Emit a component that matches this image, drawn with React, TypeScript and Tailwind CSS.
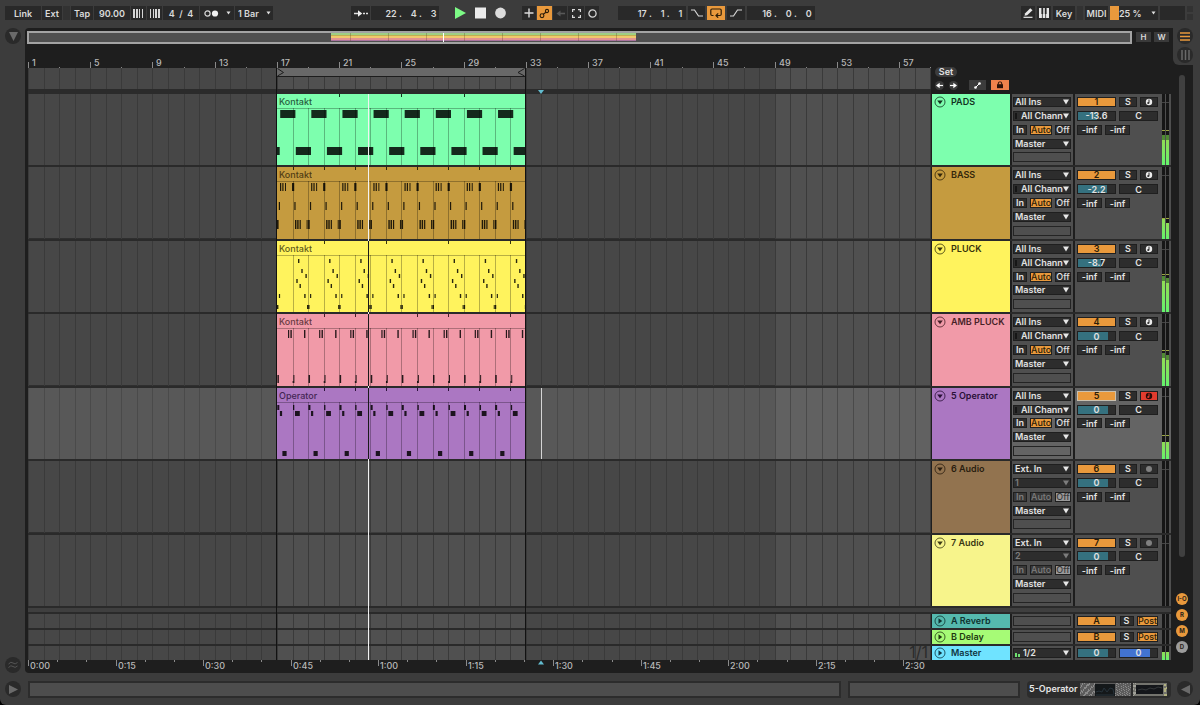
import React from "react";

const BAR = 15.56;
const CLIP_W = 249;

const range = (n: number) => Array.from({ length: n }, (_, i) => i);
const barX = (bar: number) => Math.round((bar - 1) * BAR);

type Note = [x: number, y: number, w: number, h: number];

const every = (period: number, notes: Note[]): Note[] =>
  range(Math.ceil(CLIP_W / period) + 1).flatMap((i) =>
    notes.map(([x, y, w, h]) => [x + i * period, y, w, h] as Note)
  );

const PADS: Note[] = [[0, 53, 2.7, 8], ...every(BAR * 2, [[3.2, 16, 15.2, 8], [18.8, 53, 15.2, 8]])];

const BASS: Note[] = [
  ...every(BAR * 2, [
    [3, 16, 1.2, 8],
    [5.3, 16, 1.2, 8],
    [8, 16, 1, 8],
    [15, 16, 2.2, 8],
    [0, 53, 1.6, 9],
    [18, 53, 1.4, 9],
    [20.2, 53, 1.4, 9],
    [22.6, 53, 1.2, 9],
    [29.6, 53, 1, 9],
  ]),
  ...every(BAR, [[1.8, 35, 1.2, 8]]),
];

const PLUCK: Note[] = every(BAR * 2, [
  [21, 18, 1.4, 4],
  [24.3, 28, 1.4, 4],
  [28.4, 33, 1.4, 4],
  [19.3, 38, 1.4, 4],
  [22.5, 43, 1.4, 4],
  [27.2, 53, 1.4, 4],
  [1.9, 53, 1.2, 4],
  [0, 64, 1.4, 4],
  [30, 64, 1, 4],
]);

const AMB: Note[] = [
  ...every(BAR * 2, [
    [11, 16, 1.2, 8],
    [13.4, 16, 1.4, 8],
    [27, 16, 1.4, 8],
    [0.4, 61, 1.5, 8],
    [16.4, 61, 1, 8],
    [15.6, 67, 1, 2],
  ]),
];

const OPERATOR: Note[] = every(BAR * 2, [
  [0.3, 17, 2, 5],
  [2.9, 23, 2.2, 5],
  [16, 17, 1.3, 5],
  [18, 23, 4.8, 5],
  [5.4, 63, 4.2, 5],
]);

type Track = {
  name: string;
  num: number;
  header: string;
  ink: string;
  clip?: string;
  notes?: Note[];
  ticks?: number[];
  volume: string;
  fill: string;
  audio?: string;
  selected?: boolean;
  meters: [number, number];
  peak: number;
};

const TRACKS: Track[] = [
  { name: "PADS", num: 1, header: "bg-[#7dffae]", ink: "#12331f", clip: "Kontakt", notes: PADS, ticks: [4, 8, 12], volume: "-13.6", fill: "w-1/2", meters: [25, 25], peak: 34 },
  { name: "BASS", num: 2, header: "bg-[#c59b3f]", ink: "#33260a", clip: "Kontakt", notes: BASS, ticks: [1, 3, 5, 7, 9, 11, 13, 15], volume: "-2.2", fill: "w-[78%]", meters: [20, 16], peak: 20 },
  { name: "PLUCK", num: 3, header: "bg-[#fff35d]", ink: "#37340c", clip: "Kontakt", notes: PLUCK, ticks: [3, 7, 11, 15], volume: "-8.7", fill: "w-[62%]", meters: [31, 29], peak: 37 },
  { name: "AMB PLUCK", num: 4, header: "bg-[#f19aa8]", ink: "#471f27", clip: "Kontakt", notes: AMB, ticks: [3, 5, 9, 11, 15], volume: "0", fill: "w-[82%]", meters: [28, 26], peak: 35 },
  { name: "5 Operator", num: 5, header: "bg-[#ab77c2]", ink: "#2a1038", clip: "Operator", notes: OPERATOR, ticks: [3, 5, 7, 9, 11, 13, 15], volume: "0", fill: "w-[82%]", selected: true, meters: [17, 17], peak: 23 },
  { name: "6 Audio", num: 6, header: "bg-[#92734f]", ink: "#2a1e10", volume: "0", fill: "w-[82%]", audio: "1", meters: [0, 0], peak: 0 },
  { name: "7 Audio", num: 7, header: "bg-[#f7f48b]", ink: "#3a3814", volume: "0", fill: "w-[82%]", audio: "2", meters: [0, 0], peak: 0 },
];

const LINES = range(240).map((i) => `M${barX(i + 1)}.5 0V2000`).join("");
const SHADES = range(8);

function Grid({ selected = false }: { selected?: boolean }) {
  return (
    <svg className="absolute inset-0 size-full" aria-hidden="true">
      <rect width="100%" height="100%" fill={selected ? "#585858" : "#474747"} />
      {SHADES.map((i) => (
        <rect key={i} x={barX(17 + i * 32)} width={CLIP_W} height="100%" fill={selected ? "#616161" : "#505050"} />
      ))}
      <path d={LINES} stroke={selected ? "#4a4a4a" : "#3a3a3a"} />
    </svg>
  );
}

const BOX = "h-[14px] shrink-0 bg-[#292929] text-[#dadada] flex items-center justify-center leading-none";

function Chip({ className, children, label }: { className: string; children?: React.ReactNode; label?: string }) {
  return (
    <button type="button" aria-label={label} className={`${BOX} ${className}`}>
      {children}
    </button>
  );
}

function Field({ className, value, label }: { className: string; value: string; label: string }) {
  return (
    <input
      aria-label={label}
      defaultValue={value}
      className={`h-[14px] shrink-0 bg-[#292929] text-[#dadada] text-center leading-none outline-none ${className}`}
    />
  );
}

function Caret() {
  return (
    <svg width="5" height="4" viewBox="0 0 5 4" aria-hidden="true">
      <path d="M0.5 0.5h4L2.5 3.5z" fill="#e0e0e0" />
    </svg>
  );
}

function Transport() {
  return (
    <header className="flex h-7 shrink-0 items-center pl-[5px] pr-[7px] pb-[2px]">
      <div className="flex shrink-0 gap-px">
        <Chip className="w-9">Link</Chip>
        <Chip className="w-5">Ext</Chip>
        <span className="h-[14px] w-[7px] bg-[#323232]" />
        <Chip className="w-[22px]">Tap</Chip>
        <Field className="w-9" value="90.00" label="Tempo" />
        <Chip className="w-[15px]" label="Nudge down">
          <svg width="11" height="9" viewBox="0 0 11 9" fill="#d6d6d6"><path d="M0 0h2v9H0zM3 0h2v9H3zM6 0h1v9H6zM9 0h1v9H9z" /></svg>
        </Chip>
        <Chip className="w-[15px]" label="Nudge up">
          <svg width="11" height="9" viewBox="0 0 11 9" fill="#d6d6d6"><path d="M1 0h1v9H1zM4 0h1v9H4zM6 0h2v9H6zM9 0h2v9H9z" /></svg>
        </Chip>
        <Field className="w-9" value="4  /  4" label="Time signature" />
        <Chip className="w-[34px] gap-[7px]" label="Metronome">
          <svg width="15" height="7" viewBox="0 0 15 7"><circle cx="3.5" cy="3.5" r="2.6" fill="none" stroke="#d6d6d6" strokeWidth="1.2" /><circle cx="11" cy="3.5" r="3.1" fill="#f0f0f0" /></svg>
          <Caret />
        </Chip>
        <span className="relative flex">
          <select aria-label="Quantization" className="h-[14px] w-[38px] appearance-none bg-[#292929] pl-[3px] leading-none text-[#dadada] outline-none">
            <option>1 Bar</option>
          </select>
          <span className="pointer-events-none absolute right-[2px] top-[5px]"><Caret /></span>
        </span>
      </div>
      <div className="grow-[78]" />
      <div className="flex shrink-0 gap-px">
        <Chip className="w-[19px]" label="Follow">
          <svg width="14" height="7" viewBox="0 0 14 7"><path d="M0 3.5h5M9 3.5h2M12 3.5h2" stroke="#e0e0e0" strokeWidth="1.4" /><path d="M4 0.3L8.2 3.5 4 6.7z" fill="#f0f0f0" /></svg>
        </Chip>
        <Field className="w-[68px] pl-3" value="22 .    4 .    3" label="Arrangement position" />
      </div>
      <div className="flex shrink-0 items-center gap-[9px] px-4">
        <button type="button" aria-label="Play"><svg width="11" height="12" viewBox="0 0 11 12"><path d="M0 0L11 6 0 12z" fill="#7dfb86" /></svg></button>
        <button type="button" aria-label="Stop"><svg width="11" height="12" viewBox="0 0 11 12"><path d="M0 0.5h11v11H0z" fill="#ececec" /></svg></button>
        <button type="button" aria-label="Record"><svg width="11" height="12" viewBox="0 0 11 12"><circle cx="5.5" cy="6" r="5.4" fill="#dcdcdc" /></svg></button>
      </div>
      <div className="flex shrink-0 gap-px">
        <Chip className="w-[14px]" label="Overdub"><svg width="10" height="10" viewBox="0 0 10 10"><path d="M5 0.5v9M0.5 5h9" stroke="#dadada" strokeWidth="1.4" /></svg></Chip>
        <button type="button" aria-label="Automation arm" className="flex h-[14px] w-[15px] items-center justify-center bg-[#e9993c]">
          <svg width="11" height="11" viewBox="0 0 11 11" fill="none" stroke="#2b1c08" strokeWidth="1.1"><circle cx="3" cy="7.7" r="1.9" /><circle cx="8" cy="3" r="1.6" /><path d="M4.3 6.3L6.9 4.2" /></svg>
        </button>
        <Chip className="w-[14px]" label="Re-enable automation"><svg width="9" height="7" viewBox="0 0 9 7"><path d="M9 3.5H3" stroke="#585858" strokeWidth="1.6" /><path d="M4.500 0.500v6L0.500 3.500z" fill="#585858" /></svg></Chip>
        <Chip className="w-4" label="Capture"><svg width="9" height="9" viewBox="0 0 9 9" fill="none" stroke="#d6d6d6" strokeWidth="1.2"><path d="M0.6 3V0.6H3M6 0.6h2.4V3M8.4 6v2.4H6M3 8.4H0.6V6" /></svg></Chip>
        <Chip className="w-[14px]" label="Session record"><svg width="9" height="9" viewBox="0 0 9 9"><circle cx="4.5" cy="4.5" r="3.6" fill="none" stroke="#d6d6d6" strokeWidth="1.3" /></svg></Chip>
      </div>
      <div className="flex shrink-0 gap-[2px] pl-[19px]">
        <Field className="w-[68px] pl-4" value="17 .    1 .    1" label="Loop start" />
        <Chip className="w-[17px]" label="Punch in"><svg width="12" height="8" viewBox="0 0 12 8"><path d="M0 1h3.5l4 6H12" fill="none" stroke="#d6d6d6" strokeWidth="1.2" /></svg></Chip>
        <button type="button" aria-label="Loop" className="flex h-[14px] w-[18px] items-center justify-center bg-[#e9993c]">
          <svg width="12" height="10" viewBox="0 0 12 10" fill="none" stroke="#2b1c08" strokeWidth="1.2"><path d="M3.5 7.5H2Q0.8 7.5 0.8 6.3V2.2Q0.8 1 2 1h8q1.2 0 1.2 1.2v4.1Q11.2 7.5 10 7.5H6.5M8.2 5.3L6 7.5l2.2 2.2" /></svg>
        </button>
        <Chip className="w-[18px]" label="Punch out"><svg width="12" height="8" viewBox="0 0 12 8"><path d="M0 7h3.5l4-6H12" fill="none" stroke="#d6d6d6" strokeWidth="1.2" /></svg></Chip>
        <Field className="w-[68px] pl-3" value="16 .    0 .    0" label="Loop length" />
      </div>
      <div className="grow-[206]" />
      <div className="flex shrink-0 gap-[2px]">
        <Chip className="w-[14px]" label="Draw mode"><svg width="10" height="10" viewBox="0 0 10 10"><path d="M1.5 7.800l0.700-2.600L7.300 0.200l2.200 2L4.200 7.200z" fill="#e8e8e8" /><path d="M0.500 9.300h9" stroke="#e8e8e8" strokeWidth="1.200" /></svg></Chip>
        <Chip className="w-[14px]" label="Computer MIDI keyboard">
          <svg width="10" height="10" viewBox="0 0 10 10"><path d="M0 0h10v10H0z" fill="#e8e8e8" /><path d="M2.400 0h1.800v6H2.400zM5.800 0h1.800v6H5.800zM2.900 6h0.800v4h-0.800zM6.300 6h0.800v4h-0.800z" fill="#292929" /></svg>
        </Chip>
        <Chip className="w-[22px]">Key</Chip>
        <span className="h-[14px] w-[6px] bg-[#323232]" />
        <Chip className="w-[23px]">MIDI</Chip>
        <span className="relative flex h-[14px] w-12 bg-[#292929]">
          <span className="w-[9px] bg-[#e9993c]" />
          <select aria-label="CPU load" className="h-[14px] w-[39px] appearance-none leading-none text-[#dadada] outline-none">
            <option>25 %</option>
          </select>
          <span className="pointer-events-none absolute right-[2px] top-[5px]"><Caret /></span>
        </span>
        <span className="h-[14px] w-[25px] bg-[#292929]" />
        <span className="flex w-[6px] flex-col gap-[2px]">
          <span className="flex-1 bg-[#323232]" />
          <span className="flex-1 bg-[#323232]" />
        </span>
      </div>
    </header>
  );
}

function Round({ children, label }: { children: React.ReactNode; label: string }) {
  return (
    <button type="button" aria-label={label} className="flex size-4 items-center justify-center rounded-full bg-[#2a2a2a]">
      {children}
    </button>
  );
}

function Overview() {
  return (
    <div className="flex h-4 shrink-0 items-start gap-1 pl-[2px] pr-1 pt-[3px]">
      <div className="relative h-[13px] min-w-0 flex-1 border-2 border-[#a3a3a3] bg-[#4f4f4f]">
        <svg className="absolute left-[302px] top-0" width="305" height="9" aria-hidden="true">
          <rect width="305" height="3" fill="#9fcf83" />
          <rect y="2" width="305" height="2" fill="#c3b04f" />
          <rect y="3" width="305" height="3" fill="#f0c96c" />
          <rect y="5" width="305" height="2" fill="#e2938f" />
          <rect y="7" width="305" height="1" fill="#a9739e" />
          <path d={range(8).map((i) => `M${19 + i * 38}.5 0V8`).join("")} stroke="#5a4020" strokeOpacity="0.3" />
          <path d="M112.5 0V9" stroke="#fff" />
        </svg>
      </div>
      <div className="flex gap-[3px] pt-px text-[8px] leading-[10px] text-[#dadada]">
        <button type="button" className="h-[10px] w-[15px] bg-[#3a3a3a]">H</button>
        <button type="button" className="h-[10px] w-[15px] bg-[#3a3a3a]">W</button>
      </div>
    </div>
  );
}

function BarRuler() {
  return (
    <div className="relative h-6 overflow-hidden font-medium">
      <svg className="absolute inset-0 size-full" aria-hidden="true">
        <path d={range(40).map((i) => `M${barX(1 + i * 4)}.5 18V24M${barX(3 + i * 4)}.5 23V24`).join("")} stroke="#8a8a8a" />
      </svg>
      {range(15).map((i) => (
        <span key={i} className="absolute top-[14px] leading-[10px] text-[#b8b8b8]" style={{ left: barX(1 + i * 4) + 4 }}>
          {1 + i * 4}
        </span>
      ))}
    </div>
  );
}

function TimeRuler() {
  const stamp = (s: number) => `${Math.floor(s / 60)}:${String(s % 60).padStart(2, "0")}`;
  const step = BAR * 1.875;
  return (
    <div className="relative h-[13px] min-w-0 flex-1 overflow-hidden font-medium">
      <svg className="absolute inset-0 size-full" aria-hidden="true">
        <path d={range(60).map((i) => `M${Math.round(i * step)}.5 0V${i % 3 ? 2 : 6}`).join("")} stroke="#8a8a8a" />
        <path d="M510 4.500l3-4 3 4z" fill="#62bcd0" />
      </svg>
      {range(11).map((i) => (
        <span key={i} className="absolute top-px leading-[10px] text-[#b8b8b8]" style={{ left: Math.round(i * 3 * step) + 2 }}>
          {stamp(i * 15)}
        </span>
      ))}
    </div>
  );
}

function Clip({ track }: { track: Track }) {
  return (
    <div className={`absolute left-[249px] top-0 h-full w-[248px] overflow-hidden ${track.header}`}>
      <svg className="absolute inset-0 size-full" aria-hidden="true">
        <path d={"M0 14.5H248" + range(15).map((i) => `M${barX(i + 2)}.5 14V80`).join("")} stroke="#000" strokeOpacity="0.28" />
        <path d={(track.ticks ?? []).map((t) => `M${barX(t + 1)}.5 0v3`).join("")} stroke={track.ink} />
        {(track.notes ?? []).map(([x, y, w, h], i) => (
          <rect key={i} x={x} y={y} width={w} height={h} fill="#000" fillOpacity="0.84" />
        ))}
      </svg>
      <span className="absolute left-[2px] top-[3px] font-medium leading-[10px] opacity-80" style={{ color: track.ink }}>{track.clip}</span>
    </div>
  );
}

function Drop({ value, label, dim = false, midi = false }: { value: string; label: string; dim?: boolean; midi?: boolean }) {
  return (
    <span className="relative flex h-[10px] w-full border border-[#1f1f1f] bg-[#2d2d2d]">
      {midi && <span className="my-px ml-px w-[2px] bg-[#161616]" />}
      <select
        aria-label={label}
        className={`h-2 min-w-0 flex-1 appearance-none overflow-hidden leading-[8px] outline-none ${midi ? "mr-[7px] pl-1" : "pl-px"} ${dim ? "text-[#7d7d7d]" : "text-[#e2e2e2]"}`}
      >
        <option>{value}</option>
      </select>
      <svg className="pointer-events-none absolute right-px top-px" width="6" height="6" viewBox="0 0 6 6" aria-hidden="true">
        <path d="M0 0.5h6L3 5.5z" fill={dim ? "#7d7d7d" : "#e8e8e8"} />
      </svg>
    </span>
  );
}

const SMALL = "h-[10px] border border-[#1f1f1f] leading-[8px] text-center";

function Routing({ track }: { track: Track }) {
  const audio = track.audio !== undefined;
  const off = audio ? "bg-[#383838] text-[#7d7d7d]" : "bg-[#2d2d2d] text-[#e2e2e2]";
  return (
    <div className={`grid w-[61px] shrink-0 grid-cols-[minmax(0,1fr)] grid-rows-[repeat(5,10px)] content-between py-[3px] pl-px pr-[2px] ${track.selected ? "bg-[#646464]" : "bg-[#4f4f4f]"}`}>
      <Drop value={audio ? "Ext. In" : "All Ins"} label={`${track.name} input type`} />
      <Drop value={track.audio ?? "All Channels"} label={`${track.name} input channel`} dim={audio} midi={!audio} />
      <div className="flex justify-between">
        <button type="button" className={`${SMALL} w-[14px] ${off}`}>In</button>
        <button type="button" className={`${SMALL} w-[22px] font-medium ${audio ? off : "bg-[#e9993c] text-[#2b1c08]"}`}>Auto</button>
        <button type="button" className={`${SMALL} w-4 font-medium ${audio ? "bg-[#9a9a9a] text-[#3a3a3a]" : off}`}>Off</button>
      </div>
      <Drop value="Master" label={`${track.name} output`} />
      <div className="h-[10px] border border-[#242424]" />
    </div>
  );
}

function Value({ value, label, fill, color = "bg-[#35717f]", className }: { value: string; label: string; fill?: string; color?: string; className: string }) {
  return (
    <span className={`relative flex h-[10px] border border-[#1f1f1f] bg-[#2d2d2d] ${className}`}>
      {fill && <span className={`${fill} ${color} h-full`} />}
      <input
        aria-label={label}
        defaultValue={value}
        className="absolute -inset-y-[2px] left-0 h-3 w-full text-center leading-[8px] text-[#e2e2e2] outline-none"
      />
    </span>
  );
}

function Meter({ levels, peak = 0, notch = false }: { levels: [number, number]; peak?: number; notch?: boolean }) {
  return (
    <div className="flex w-[7px] gap-px">
      {levels.map((h, i) => (
        <div key={i} className="relative flex flex-1 flex-col justify-end bg-[#161616]">
          {notch && <span className="absolute inset-x-0 top-[8px] h-px bg-[#444444]" />}
          {peak > 0 && <span className="absolute inset-x-0 h-px bg-[#9aa640]" style={{ bottom: peak }} />}
          {peak > 30 && h > 20 && <span className="h-[5px] bg-[#4f8a33]" />}
          <span className="bg-gradient-to-t from-[#62f26c] to-[#8fdc55]" style={{ height: h }} />
        </div>
      ))}
    </div>
  );
}

function Mixer({ track }: { track: Track }) {
  return (
    <div className={`flex w-24 shrink-0 justify-between px-[2px] ${track.selected ? "bg-[#646464]" : "bg-[#4f4f4f]"}`}>
      <div className="grid w-[81px] grid-rows-[repeat(5,10px)] content-between py-[3px]">
        <div className="flex justify-between">
          <button type="button" className={`h-[10px] w-[39px] border bg-[#e9993c] leading-[8px] text-[#2b1c08] ${track.selected ? "border-[#c9c0b0]" : "border-[#1f1f1f]"}`}>{track.num}</button>
          <button type="button" className={`${SMALL} w-[18px] bg-[#2d2d2d] text-[#e2e2e2]`}>S</button>
          <button type="button" aria-label={`Arm ${track.name}`} className={`${SMALL} flex w-[18px] items-center justify-center ${track.selected ? "bg-[#e23c2e]" : "bg-[#2d2d2d]"}`}>
            <svg width="8" height="8" viewBox="0 0 8 8">
              {track.audio ? (
                <circle cx="4" cy="4" r="3" fill="#808080" />
              ) : (
                <>
                  <circle cx="4" cy="4" r="3.2" fill={track.selected ? "#2a0b08" : "#ececec"} />
                  <path d="M4 1.5v3.2" stroke={track.selected ? "#e23c2e" : "#2d2d2d"} />
                  <circle cx="3.3" cy="5" r="1.1" fill={track.selected ? "#e23c2e" : "#2d2d2d"} />
                </>
              )}
            </svg>
          </button>
        </div>
        <div className="flex justify-between">
          <Value className="w-[39px]" value={track.volume} fill={track.fill} label={`${track.name} volume`} />
          <Value className="w-[39px]" value="C" label={`${track.name} pan`} />
        </div>
        <div className="flex gap-[3px]">
          <Value className="w-[25px]" value="-inf" label={`${track.name} send A`} />
          <Value className="w-[25px]" value="-inf" label={`${track.name} send B`} />
        </div>
      </div>
      <Meter levels={track.meters} peak={track.peak} notch />
    </div>
  );
}

function Fold({ open, color }: { open: boolean; color: string }) {
  return (
    <svg width="12" height="12" viewBox="0 0 12 12" className="shrink-0" aria-hidden="true">
      <circle cx="6" cy="6" r="5" fill="none" stroke={color} strokeOpacity="0.8" />
      <path d={open ? "M3.2 4.5h5.6L6 8.2z" : "M4.5 3.2v5.6L8.2 6z"} fill={color} />
    </svg>
  );
}

function TrackRow({ track }: { track: Track }) {
  return (
    <div className="flex min-h-0 flex-1 border-b-2 border-[#2a2a2a]">
      <div className="relative min-w-0 flex-1 overflow-hidden">
        <Grid selected={track.selected} />
        {track.clip && <Clip track={track} />}
        {track.selected && <span className="absolute left-[513px] top-0 h-full w-px bg-[#d5d5d5]" />}
        {track.num > 2 && track.clip && <span className="absolute left-[340px] top-0 z-20 h-full w-px bg-[#1a1a1a]" />}
      </div>
      <div className={`ml-px mr-[2px] flex w-[78px] shrink-0 items-start gap-[5px] pl-[2px] pt-[2px] ${track.header}`} style={{ color: track.ink }}>
        <Fold open color={track.ink} />
        <span className="whitespace-nowrap leading-[11px]">{track.name}</span>
      </div>
      <Routing track={track} />
      <div className="w-[2px] shrink-0" />
      <Mixer track={track} />
    </div>
  );
}

function ReturnRow({ name, letter, header, ink }: { name: string; letter?: string; header: string; ink: string }) {
  return (
    <div className="flex h-4 shrink-0 border-t-2 border-[#2a2a2a]">
      <div className="relative min-w-0 flex-1">
        <Grid />
        {!letter && <span className="absolute bottom-0 right-[3px] text-[16px] font-normal leading-[16px] text-[#2b2b2b]">1/1</span>}
      </div>
      <div className={`ml-px mr-[2px] flex w-[78px] shrink-0 items-center gap-[5px] pl-[2px] ${header}`} style={{ color: ink }}>
        <Fold open={false} color={ink} />
        <span className="whitespace-nowrap leading-[11px]">{letter ? `${letter} ${name}` : name}</span>
      </div>
      <div className="flex w-[61px] shrink-0 items-center bg-[#4f4f4f] pl-px pr-[2px]">
        {letter ? (
          <div className="h-[10px] w-full border border-[#242424]" />
        ) : (
          <span className="relative flex h-[10px] w-full items-end border border-[#1f1f1f] bg-[#2d2d2d]">
            <span className="ml-px h-1 w-[2px] bg-[#6fe070]" />
            <span className="ml-px h-[3px] w-[2px] bg-[#6fe070]" />
            <select aria-label="Master output" className="h-2 min-w-0 flex-1 appearance-none pl-[3px] leading-[8px] text-[#e2e2e2] outline-none">
              <option>1/2</option>
            </select>
            <svg className="pointer-events-none absolute right-px top-px" width="6" height="6" viewBox="0 0 6 6" aria-hidden="true"><path d="M0 0.5h6L3 5.5z" fill="#e8e8e8" /></svg>
          </span>
        )}
      </div>
      <div className="w-[2px] shrink-0" />
      <div className="flex w-24 shrink-0 justify-between bg-[#4f4f4f] px-[2px]">
        <div className="flex w-[81px] items-center justify-between">
          {letter ? (
            <>
              <button type="button" className={`${SMALL} w-[39px] bg-[#e9993c] text-[#2b1c08]`}>{letter}</button>
              <button type="button" className={`${SMALL} w-[14px] bg-[#2d2d2d] text-[#e2e2e2]`}>S</button>
              <button type="button" className={`${SMALL} w-[21px] bg-[#e9993c] font-medium text-[#2b1c08]`}>Post</button>
            </>
          ) : (
            <>
              <Value className="w-[39px]" value="0" fill="w-[82%]" label="Master volume" />
              <Value className="w-[39px]" value="0" fill="w-[82%]" color="bg-[#4273d0]" label="Cue volume" />
            </>
          )}
        </div>
        <Meter levels={letter ? [0, 0] : [8, 8]} />
      </div>
    </div>
  );
}

function Scrub() {
  return (
    <div className="relative h-[21px] overflow-hidden">
      <Grid />
      <div className="absolute left-[249px] top-0 h-[9px] w-[248px] border-b border-[#1c1c1c] bg-[#686868]">
        <svg className="absolute inset-0 size-full" aria-hidden="true">
          <path d="M0.5 0.500L6.500 4.500 0.500 8M247.500 0.500L241 4.500l6.500 3.500" fill="none" stroke="#1c1c1c" />
        </svg>
      </div>
    </div>
  );
}

function SetTools() {
  return (
    <div className="w-[240px] shrink-0 pl-1 pt-[23px]">
      <button type="button" className="block h-[10px] w-[22px] rounded-full bg-[#3c3c3c] leading-[10px] text-[#e2e2e2]">Set</button>
      <div className="flex items-center pt-[3px]">
        <button type="button" aria-label="Previous locator" className="mr-[5px] flex size-[9px] items-center justify-center rounded-full bg-[#3c3c3c]">
          <svg width="7" height="7" viewBox="0 0 7 7"><path d="M7 3.5H3" stroke="#fff" strokeWidth="1.2" /><path d="M0 3.5L3.7 0.8v5.4z" fill="#fff" /></svg>
        </button>
        <button type="button" aria-label="Next locator" className="mr-[11px] flex size-[9px] items-center justify-center rounded-full bg-[#3c3c3c]">
          <svg width="7" height="7" viewBox="0 0 7 7"><path d="M0 3.5h4" stroke="#fff" strokeWidth="1.2" /><path d="M7 3.5L3.3 0.8v5.4z" fill="#fff" /></svg>
        </button>
        <button type="button" aria-label="Automation mode" className="mr-[5px] flex h-[10px] w-[17px] items-center justify-center bg-[#3c3c3c]">
          <svg width="7" height="7" viewBox="0 0 7 7"><path d="M1.5 5.5l4-4" stroke="#fff" /><circle cx="1.5" cy="5.5" r="1.3" fill="#fff" /><circle cx="5.5" cy="1.5" r="1.3" fill="#fff" /></svg>
        </button>
        <button type="button" aria-label="Lock envelopes" className="flex h-[10px] w-[18px] items-center justify-center bg-[#f0824c]">
          <svg width="8" height="8" viewBox="0 0 8 8"><path d="M1 3.2h6v4H1z" fill="#2b1208" /><path d="M2.3 3.5V2q0-1 1-1h1.400q1 0 1 1v1.500" fill="none" stroke="#2b1208" /></svg>
        </button>
      </div>
    </div>
  );
}

const BADGES = [
  ["I-O", "bg-[#e9993c]"],
  ["R", "bg-[#e9993c]"],
  ["M", "bg-[#e9993c]"],
  ["D", "bg-[#9c9c9c]"],
];

function SideColumn() {
  return (
    <aside className="flex w-5 shrink-0 flex-col rounded-br bg-[#1e1e1e]">
      <div className="flex h-[37px] shrink-0 flex-col items-end gap-[3px] rounded-bl-md bg-[#3c3c3c]">
        <Round label="Arrangement view">
          <svg width="10" height="9" viewBox="0 0 10 9"><path d="M0 1h10M0 4.5h10M0 8h10" stroke="#e9993c" strokeWidth="1.5" /></svg>
        </Round>
        <Round label="Session view">
          <svg width="9" height="10" viewBox="0 0 9 10"><path d="M1 0v10M4.5 0v10M8 0v10" stroke="#6a6a6a" strokeWidth="1.5" /></svg>
        </Round>
      </div>
      <div className="flex-1 pb-[36px] pl-[6px] pt-[10px]">
        <div className="h-full w-[6px] rounded-full bg-[#404040]" />
      </div>
      <div className="flex shrink-0 flex-col items-center gap-1 pb-5 pr-[2px]">
        {BADGES.map(([text, tone]) => (
          <button key={text} type="button" className={`size-3 rounded-full text-center text-[6px] font-bold leading-[12px] text-[#2a2118] ${tone}`}>{text}</button>
        ))}
      </div>
    </aside>
  );
}

const speckle = (n: number, w: number, h: number, seed: number) =>
  range(n)
    .map((i) => {
      const a = (i * 7919 + seed * 104729) % 9973;
      return `M${a % w} ${(Math.floor(a / w) * 3 + i) % h}h1v1h-1z`;
    })
    .join("");

function Footer() {
  return (
    <footer className="flex h-8 shrink-0 items-center pl-[5px] pr-[7px]">
      <Round label="Show info view"><svg width="9" height="9" viewBox="0 0 9 9"><path d="M0 0l9 4.5L0 9z" fill="#6a6a6a" /></svg></Round>
      <div className="ml-[7px] h-[17px] min-w-0 grow border-2 border-[#2c2c2c] bg-[#4d4d4d]" />
      <div className="ml-[7px] h-[17px] w-[172px] shrink-0 border-2 border-[#2c2c2c] bg-[#4d4d4d]" />
      <div className="ml-[7px] flex h-[17px] w-[144px] shrink-0 items-center gap-[2px] rounded-sm bg-[#2c2c2c] pl-[2px]">
        <span className="whitespace-nowrap text-[#e6e6e6]">5-Operator</span>
        <svg width="88" height="13" className="shrink-0" aria-hidden="true">
          <rect width="51" height="13" fill="#5c5c5c" />
          <rect x="15" y="1" width="20" height="12" fill="#14181a" />
          <path d={speckle(60, 15, 13, 1)} fill="#8a8a8a" />
          <path d={speckle(60, 16, 13, 4)} fill="#8a8a8a" transform="translate(35 0)" />
          <path d="M16 9l3-1 3 1 2-4 3 4 3-4 3 1 1 5M16 12h18" fill="none" stroke="#26323a" />
          <rect x="53" width="34" height="13" fill="#74746e" />
          <rect x="56" y="2" width="27" height="9" fill="#14161a" />
          <path d="M58 7l4-1 4 1 4-2 4 1 4-2 4 1" fill="none" stroke="#34383a" />
          <path d={speckle(20, 3, 13, 2)} fill="#a0a098" transform="translate(53 0)" />
          <path d={speckle(20, 3, 13, 3)} fill="#b0b080" transform="translate(84 0)" />
        </svg>
      </div>
      <div className="ml-[6px]">
        <Round label="Show device view"><svg width="9" height="9" viewBox="0 0 9 9"><path d="M9 0L0 4.5 9 9z" fill="#6a6a6a" /></svg></Round>
      </div>
    </footer>
  );
}

export default function App() {
  return (
    <div className="bg-black">
      <div className="flex min-h-screen flex-col rounded-b-md bg-[#3c3c3c] font-['Inter','Liberation_Sans',sans-serif] text-[9px] font-semibold">
        <Transport />
        <main className="flex flex-1">
          <div className="flex w-[25px] shrink-0 flex-col items-start justify-between pl-[5px]">
            <Round label="Show browser"><svg width="9" height="9" viewBox="0 0 9 9"><path d="M0 0h9L4.5 9z" fill="#6a6a6a" /></svg></Round>
            <Round label="Groove pool"><svg width="10" height="8" viewBox="0 0 10 8" fill="none" stroke="#555"><path d="M0.5 3Q3 0 5 2t4.5-0.5M0.5 6.5Q3 3.5 5 5.5t4.5-0.5" /></svg></Round>
          </div>
          <section className="flex min-w-0 flex-1 flex-col rounded-l bg-[#1e1e1e]">
            <Overview />
            <div className="flex flex-1 flex-col pl-[3px] pr-[2px]">
              <div className="relative flex flex-1 flex-col">
                <div className="flex h-[50px] shrink-0">
                  <div className="relative min-w-0 flex-1">
                    <BarRuler />
                    <Scrub />
                    <div className="h-[5px] bg-[#2b2b2b]" />
                    <svg className="absolute bottom-0 left-[510px]" width="6" height="4" aria-hidden="true"><path d="M0 0h6L3 4z" fill="#62bcd0" /></svg>
                  </div>
                  <SetTools />
                </div>
                {TRACKS.map((t) => (
                  <TrackRow key={t.num} track={t} />
                ))}
                <div className="h-1 shrink-0 bg-[#3f3f3f]" />
                <ReturnRow name="Reverb" letter="A" header="bg-[#55b9ae]" ink="#0f3330" />
                <ReturnRow name="Delay" letter="B" header="bg-[#a6fb76]" ink="#20380f" />
                <ReturnRow name="Master" header="bg-[#6fe3ff]" ink="#0f3542" />
                <span className="pointer-events-none absolute bottom-0 left-[248px] top-6 w-px bg-[#121212]" />
                <span className="pointer-events-none absolute bottom-0 left-[497px] top-6 w-px bg-[#121212]" />
                <span className="pointer-events-none absolute bottom-0 left-[340px] top-[50px] z-10 w-px bg-[#f2f2f2]" />
              </div>
              <div className="flex h-[13px] shrink-0">
                <TimeRuler />
                <div className="w-[240px] shrink-0" />
              </div>
            </div>
          </section>
          <SideColumn />
          <div className="w-[7px] shrink-0" />
        </main>
        <Footer />
      </div>
    </div>
  );
}
